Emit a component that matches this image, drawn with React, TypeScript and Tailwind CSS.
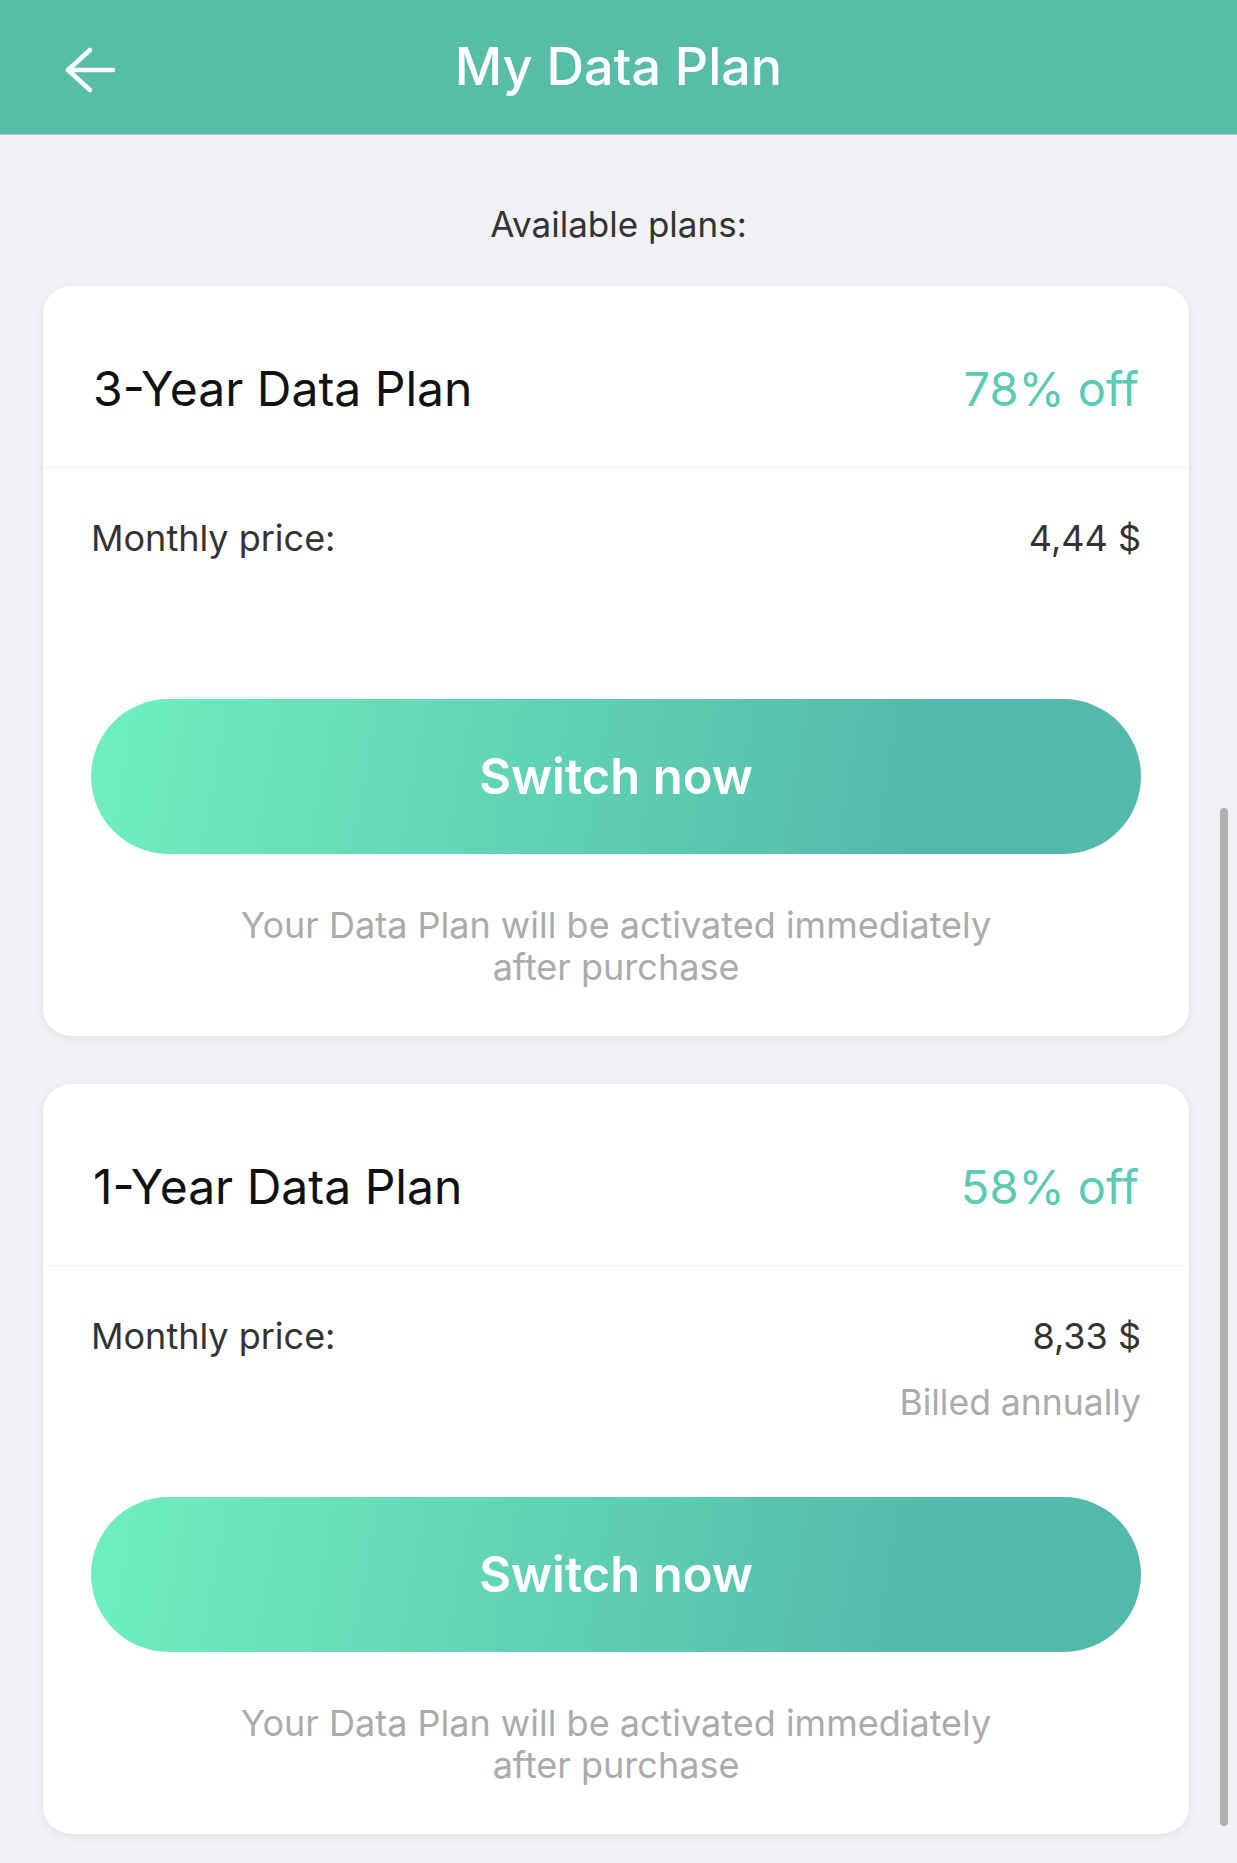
type Plan = {
  id: string;
  title: string;
  discount: string;
  price: string;
  note?: string;
};

const PLANS: Plan[] = [
  { id: '3y', title: '3-Year Data Plan', discount: '78% off', price: '4,44 $' },
  { id: '1y', title: '1-Year Data Plan', discount: '58% off', price: '8,33 $', note: 'Billed annually' },
];

function BackArrow() {
  return (
    <svg width="56" height="48" viewBox="0 0 56 48" fill="none" stroke="currentColor" strokeWidth="4.5" strokeLinecap="round" strokeLinejoin="round">
      <path d="M6 24H51" />
      <path d="M28 4L6 24L28 44" />
    </svg>
  );
}

function PlanCard({ plan }: { plan: Plan }) {
  return (
    <article className="rounded-[28px] bg-white shadow-[0_2px_10px_rgba(0,0,0,0.08)]">
      <div className="flex items-center justify-between border-b border-[#f1f1f3] px-[50px] pt-[73px] pb-[48px]">
        <h3 className="text-[48px] leading-[60px] font-normal text-[#111]">{plan.title}</h3>
        <span className="text-[47px] leading-[60px] text-[#5cc9b3]">{plan.discount}</span>
      </div>

      <div className="px-[48px] pt-[48px] pb-[48px]">
        <div className="flex items-center justify-between text-[36px] leading-[44px] text-[#333]">
          <span>Monthly price:</span>
          <span>{plan.price}</span>
        </div>
        <p className="mt-[23px] h-[44px] text-right text-[35.5px] leading-[44px] text-[#ababab]">
          {plan.note ?? ''}
        </p>

        <button
          type="button"
          className="mt-[72px] flex h-[155px] w-full items-center justify-center rounded-full bg-[linear-gradient(100deg,#70efbe_0%,#53b9ab_80%)] text-[49px] font-semibold text-white"
        >
          Switch now
        </button>

        <p className="mx-auto mt-[50px] max-w-[820px] text-center text-[36px] leading-[42px] text-[#ababab]">
          Your Data Plan will be activated immediately after purchase
        </p>
      </div>
    </article>
  );
}

export default function App() {
  return (
    <div className="relative min-h-[1863px] bg-[#f1f1f6] font-['Inter','Liberation_Sans',sans-serif]">
      <header className="relative flex h-[135px] items-center justify-center border-b border-[#b9c7c3] bg-[#57bda7]">
        <button type="button" className="absolute left-[62px] top-[46px] text-white">
          <BackArrow />
        </button>
        <h1 className="text-[52px] font-medium text-white">My Data Plan</h1>
      </header>

      <p className="mt-[68px] text-center text-[35px] leading-[42px] text-[#333]">Available plans:</p>

      <div className="mt-[41px] flex flex-col gap-[48px] pl-[43px] pr-[48px] pb-[29px]">
        {PLANS.map((plan) => (
          <PlanCard key={plan.id} plan={plan} />
        ))}
      </div>

      {/* scroll indicator */}
      <div className="absolute left-[1220px] top-[808px] h-[1018px] w-[8px] rounded-full bg-[#b0b0b0]" />
    </div>
  );
}
